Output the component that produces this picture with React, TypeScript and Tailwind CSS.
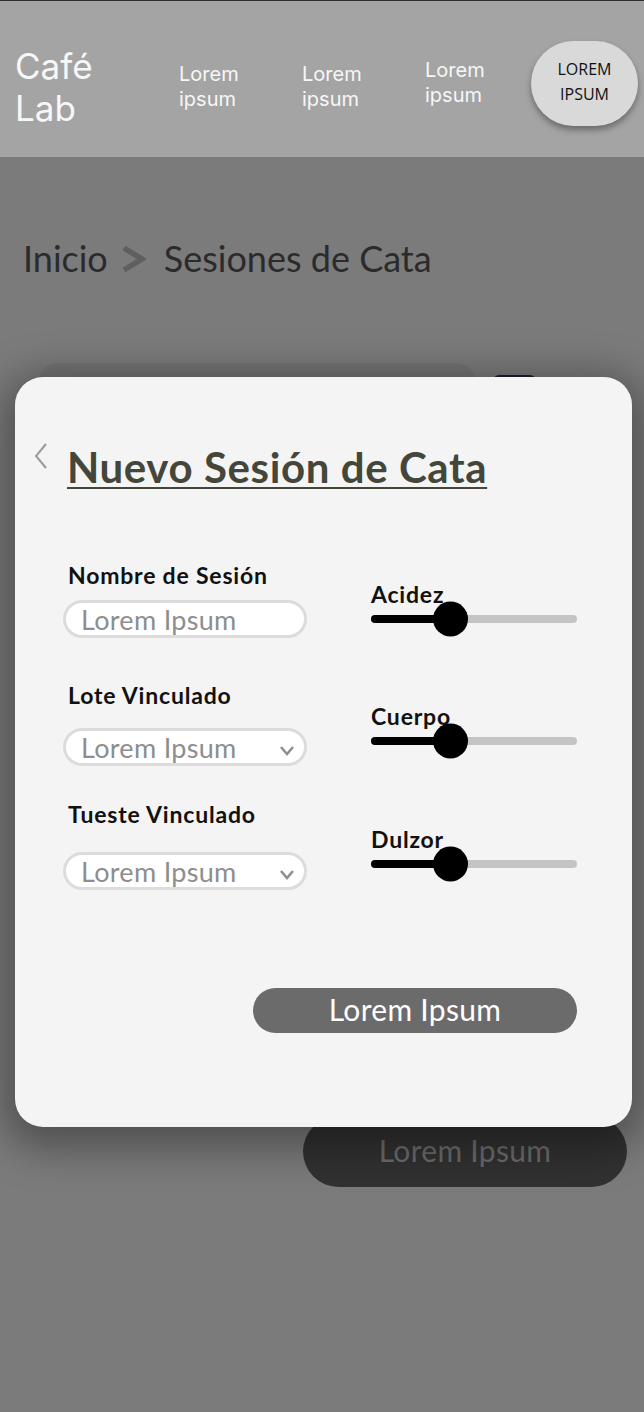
const navItems = [
  { label: ['Lorem', 'ipsum'], className: 'w-[123px] mt-[61px]' },
  { label: ['Lorem', 'ipsum'], className: 'w-[123px] mt-[61px]' },
  { label: ['Lorem', 'ipsum'], className: 'w-[106px] mt-[57px]' },
]

function Header() {
  return (
    <header className="flex h-[157px] items-start border-t border-[#2e2e2e] bg-[#a4a4a4] pl-[15px] font-['Inter',sans-serif] text-[#f7f7f7]">
      <div className="mt-[44px] w-[164px] text-[35px] leading-[42px]">
        Café
        <br />
        Lab
      </div>
      {navItems.map((item, i) => (
        <div key={i} className={`${item.className} text-[20px] leading-[25px]`}>
          {item.label[0]}
          <br />
          {item.label[1]}
        </div>
      ))}
      <button className="mt-[40px] flex h-[85px] w-[107px] items-center justify-center rounded-[44px] bg-[#d9d9d9] pb-[4px] font-['Open_Sans',sans-serif] text-[16px] leading-[25px] text-[#111] shadow-[0_4px_6px_rgba(0,0,0,0.35)]">
        LOREM
        <br />
        IPSUM
      </button>
    </header>
  )
}

function Breadcrumb() {
  return (
    <div className="ml-[23px] mt-[78px] flex items-center text-[36px] leading-[46px] text-[#2b2b2b]">
      <span>Inicio</span>
      <svg width="26" height="28" viewBox="0 0 26 28" className="ml-[12px] mr-[18px] mt-[2px]">
        <polyline points="4,3 22,14 4,25" fill="none" stroke="#5f5f5f" strokeWidth="5.5" strokeLinejoin="miter" />
      </svg>
      <span>Sesiones de Cata</span>
    </div>
  )
}

function TextInput() {
  return (
    <div className="flex h-[38px] w-[244px] items-center rounded-full border-[3px] border-[#dcdcdc] bg-white pl-[15px] text-[27px] leading-none tracking-[0.3px] text-[#8e8e8e]">
      Lorem Ipsum
    </div>
  )
}

function SelectInput() {
  return (
    <div className="flex h-[38px] w-[244px] items-center justify-between rounded-full border-[3px] border-[#dcdcdc] bg-white pl-[15px] pr-[9px] text-[27px] leading-none tracking-[0.3px] text-[#8e8e8e]">
      <span>Lorem Ipsum</span>
      <svg width="16" height="11" viewBox="0 0 16 11" className="mt-[6px]">
        <polyline points="2,2 8,9 14,2" fill="none" stroke="#8e8e8e" strokeWidth="2.5" />
      </svg>
    </div>
  )
}

function Slider({ label, className }: { label: string; className?: string }) {
  return (
    <div className={className}>
      <div className="text-[23px] font-bold leading-[28px] tracking-[0.8px] text-[#111]">{label}</div>
      <div className="flex h-[22px] w-[206px] items-center">
        <div className="relative h-[8px] w-full rounded-full bg-[#c4c4c4]">
          <div className="absolute left-0 top-0 h-full w-[80px] rounded-full bg-black" />
          <div className="absolute left-[62px] top-1/2 size-[35px] -translate-y-1/2 rounded-full bg-black" />
        </div>
      </div>
    </div>
  )
}

function NewSessionModal() {
  const labelCls = 'ml-[5px] text-[23px] font-bold leading-[28px] tracking-[0.8px] text-[#111]'
  return (
    <div className="absolute left-[15px] top-[377px] h-[750px] w-[617px] rounded-[28px] bg-[#f4f4f4] pl-[19px] pt-[65px] font-['Lato',sans-serif] shadow-[0_10px_40px_12px_rgba(0,0,0,0.35)]">
      <div className="flex items-start">
        <svg width="14" height="26" viewBox="0 0 14 26" className="mt-[1px]">
          <polyline points="12,1 2,13 12,25" fill="none" stroke="#9a9a9a" strokeWidth="2" />
        </svg>
        <h1 className="ml-[19px] text-[42px] font-bold leading-[50px] tracking-[0.6px] text-[#45463a] underline decoration-[1.5px] underline-offset-[4px]">
          Nuevo Sesión de Cata
        </h1>
      </div>

      <div className="ml-[29px] mt-[69px] grid grid-cols-[244px_206px] items-start gap-x-[64px]">
        <div className="flex flex-col">
          <label className={labelCls}>Nombre de Sesión</label>
          <div className="mt-[11px]">
            <TextInput />
          </div>
          <label className={`${labelCls} mt-[43px]`}>Lote Vinculado</label>
          <div className="mt-[19px]">
            <SelectInput />
          </div>
          <label className={`${labelCls} mt-[34px]`}>Tueste Vinculado</label>
          <div className="mt-[24px]">
            <SelectInput />
          </div>
        </div>
        <div className="flex flex-col pt-[19px]">
          <Slider label="Acidez" />
          <Slider label="Cuerpo" className="mt-[72px]" />
          <Slider label="Dulzor" className="mt-[73px]" />
        </div>
      </div>

      <div className="mt-[98px] flex justify-end pr-[55px]">
        <button className="h-[45px] w-[324px] rounded-full bg-[#6b6b6b] pb-[3px] text-[30px] leading-none tracking-[0.3px] text-white">
          Lorem Ipsum
        </button>
      </div>
    </div>
  )
}

export default function App() {
  return (
    <div className="relative min-h-[1412px] overflow-hidden bg-[#7b7b7b] font-['Lato',sans-serif]">
      <Header />
      <Breadcrumb />
      <div className="ml-[38px] mt-[82px] flex items-start">
        <div className="h-[700px] w-[438px] rounded-[20px] bg-[#747474]" />
        <div className="ml-[17px] mt-[12px] h-[60px] w-[43px] rounded-t-[6px] bg-[#1b2030]" />
      </div>
      <div className="mr-[17px] mt-[53px] flex justify-end">
        <button className="h-[71px] w-[324px] rounded-full bg-[#313131] pb-[3px] text-[30px] leading-none tracking-[0.3px] text-[#6b6b6b]">
          Lorem Ipsum
        </button>
      </div>
      <NewSessionModal />
    </div>
  )
}
